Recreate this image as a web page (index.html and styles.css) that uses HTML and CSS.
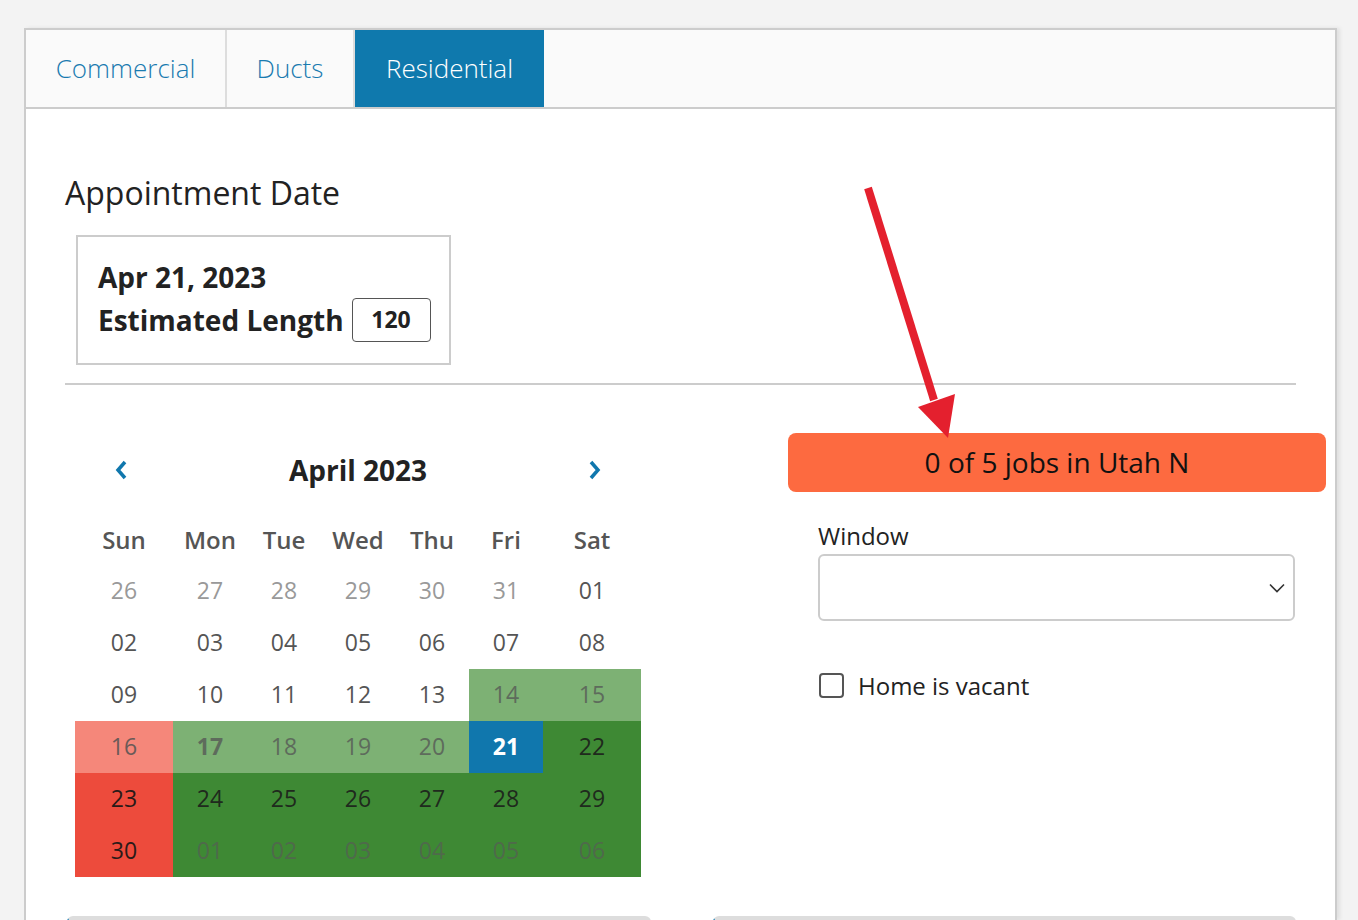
FILE: index.html
```html
<!DOCTYPE html>
<html>
<head>
  <meta charset="utf-8">
  <title>Appointment</title>
  <link rel="stylesheet" href="styles.css">
</head>
<body>
  <div class="panel">
    <div class="tabs">
      <div class="tab">Commercial</div>
      <div class="tab">Ducts</div>
      <div class="tab active">Residential</div>
    </div>

    <div class="content">
      <h2 class="title">Appointment Date</h2>
      <div class="date-box">
        <div class="date-line">Apr 21, 2023</div>
        <div class="date-line">Estimated Length <span class="length-input">120</span></div>
      </div>
      <div class="rule"></div>

      <div class="columns">
        <div class="calendar">
          <div class="cal-head">
            <span class="nav">
              <svg width="14" height="22" viewBox="0 0 14 22"><path d="M11 3L4 11L11 19" fill="none" stroke="#1077ad" stroke-width="3.5"/></svg>
            </span>
            <span class="month">April 2023</span>
            <span class="nav">
              <svg width="14" height="22" viewBox="0 0 14 22"><path d="M3 3L10 11L3 19" fill="none" stroke="#1077ad" stroke-width="3.5"/></svg>
            </span>
          </div>
          <div class="cal-grid">
            <div class="wd">Sun</div><div class="wd">Mon</div><div class="wd">Tue</div><div class="wd">Wed</div><div class="wd">Thu</div><div class="wd">Fri</div><div class="wd">Sat</div>

            <div class="d other">26</div><div class="d other">27</div><div class="d other">28</div><div class="d other">29</div><div class="d other">30</div><div class="d other">31</div><div class="d">01</div>

            <div class="d">02</div><div class="d">03</div><div class="d">04</div><div class="d">05</div><div class="d">06</div><div class="d">07</div><div class="d">08</div>

            <div class="d">09</div><div class="d">10</div><div class="d">11</div><div class="d">12</div><div class="d">13</div><div class="d light">14</div><div class="d light">15</div>

            <div class="d salmon">16</div><div class="d light bold">17</div><div class="d light">18</div><div class="d light">19</div><div class="d light">20</div><div class="d selected">21</div><div class="d dark">22</div>

            <div class="d red">23</div><div class="d dark">24</div><div class="d dark">25</div><div class="d dark">26</div><div class="d dark">27</div><div class="d dark">28</div><div class="d dark">29</div>

            <div class="d red">30</div><div class="d dark next">01</div><div class="d dark next">02</div><div class="d dark next">03</div><div class="d dark next">04</div><div class="d dark next">05</div><div class="d dark next">06</div>
          </div>
        </div>

        <div class="side">
          <div class="jobs">0 of 5 jobs in Utah N</div>
          <div class="field">
            <label class="field-label">Window</label>
            <div class="select">
              <svg width="16" height="10" viewBox="0 0 16 10"><path d="M1 1.5L8 8.5L15 1.5" fill="none" stroke="#333" stroke-width="1.6"/></svg>
            </div>
          </div>
          <label class="check">
            <span class="box"></span>
            Home is vacant
          </label>
        </div>
      </div>

      <div class="cards">
        <div class="card"></div>
        <div class="card"></div>
      </div>
    </div>
  </div>

  <svg class="annotation" width="1358" height="920" viewBox="0 0 1358 920">
    <line x1="868" y1="188" x2="934" y2="400" stroke="#e4202e" stroke-width="8"/>
    <polygon points="918,407 955,394 948,438" fill="#e4202e"/>
  </svg>
</body>
</html>
```

FILE: styles.css
```css
body {
  margin: 0;
  background: #f3f3f3;
  font-family: "Open Sans", "Noto Sans", sans-serif;
  color: #222;
  height: 920px;
  overflow: hidden;
  padding: 28px 0 0 24px;
  box-sizing: border-box;
}
.panel {
  width: 1313px;
  border: 2px solid #ccc;
  border-bottom: none;
  background: #fff;
  box-sizing: border-box;
  box-shadow: 3px 0 4px rgba(0,0,0,0.08);
  height: 892px;
  overflow: hidden;
}
.tabs {
  display: flex;
  height: 79px;
  background: #fafafa;
  border-bottom: 2px solid #ccc;
  box-sizing: border-box;
}
.tab {
  display: flex;
  align-items: center;
  justify-content: center;
  padding-bottom: 2px;
  font-size: 26px;
  font-weight: 300;
  color: #1a7bb0;
  border-right: 2px solid #ddd;
}
.tab:nth-child(1) { width: 199px; }
.tab:nth-child(2) { width: 126px; }
.tab.active {
  width: 189px;
  background: #0f79ad;
  color: #fff;
  border-right: none;
}
.content {
  padding: 0 39px;
}
.title {
  margin: 64px 0 0 0;
  font-size: 32px;
  font-weight: 400;
  line-height: 40px;
  color: #222;
}
.date-box {
  margin: 22px 0 0 11px;
  width: 375px;
  border: 2px solid #ccc;
  box-sizing: border-box;
  padding: 19px 10px 21px 20px;
}
.date-line {
  display: flex;
  align-items: center;
  white-space: nowrap;
  font-size: 28px;
  font-weight: 700;
  line-height: 42px;
  color: #222;
}
.length-input {
  display: inline-block;
  flex-shrink: 0;
  margin-left: 8px;
  width: 79px;
  height: 44px;
  box-sizing: border-box;
  border: 1.5px solid #555;
  border-radius: 4px;
  font-size: 23px;
  line-height: 41px;
  text-align: center;
}
.rule {
  margin-top: 18px;
  height: 2px;
  background: #ccc;
}
.columns {
  display: flex;
  margin-top: 48px;
}
.calendar {
  width: 566px;
  margin: 12px 147px 0 10px;
  flex-shrink: 0;
}
.cal-head {
  display: grid;
  grid-template-columns: 98px 370px 98px;
  height: 50px;
  align-items: center;
}
.nav {
  display: flex;
  justify-content: center;
  padding-right: 6px;
}
.nav:last-child { padding: 0 0 0 6px; }
.month {
  text-align: center;
  font-size: 28px;
  font-weight: 700;
  color: #222;
}
.cal-grid {
  display: grid;
  grid-template-columns: 98px repeat(5, 74px) 98px;
  grid-auto-rows: 52px;
  grid-template-rows: 47px;
  margin-top: 23px;
}
.wd {
  font-size: 24px;
  font-weight: 600;
  color: #555;
  text-align: center;
  line-height: 44px;
}
.d {
  font-size: 23px;
  color: #555;
  text-align: center;
  line-height: 50px;
}
.d.other { color: #999; }
.d.light { background: #7db174; color: #5e6b5c; }
.d.bold { font-weight: 700; }
.d.salmon { background: #f5877a; color: #6b5a58; }
.d.selected { background: #1077ad; color: #fff; font-weight: 700; }
.d.dark { background: #3e8934; color: #1f2a1d; }
.d.dark.next { color: #4f6a4b; }
.d.red { background: #ed4b3c; color: #2a1a18; }
.side {
  width: 538px;
  flex-shrink: 0;
}
.jobs {
  height: 59px;
  background: #fd6a40;
  border-radius: 8px;
  font-size: 28px;
  line-height: 59px;
  text-align: center;
  color: #111;
}
.field {
  margin: 28px 0 0 30px;
}
.field-label {
  display: block;
  font-size: 24px;
  line-height: 32px;
  color: #222;
}
.select {
  margin-top: 2px;
  width: 477px;
  height: 67px;
  box-sizing: border-box;
  border: 2px solid #ccc;
  border-radius: 6px;
  display: flex;
  align-items: center;
  justify-content: flex-end;
  padding-right: 8px;
}
.check {
  display: flex;
  align-items: center;
  margin: 48px 0 0 31px;
  font-size: 24px;
  color: #222;
}
.box {
  width: 25px;
  height: 25px;
  box-sizing: border-box;
  border: 2px solid #555;
  border-radius: 4px;
  margin-right: 14px;
}
.cards {
  display: flex;
  gap: 62px;
  margin: 39px 0 0 2px;
}
.card {
  width: 583px;
  height: 40px;
  border-top: 4px solid #ddd;
  border-left: 2px solid #1077ad;
  border-radius: 6px 6px 0 0;
}
.annotation {
  position: absolute;
  left: 0;
  top: 0;
  pointer-events: none;
}
```
